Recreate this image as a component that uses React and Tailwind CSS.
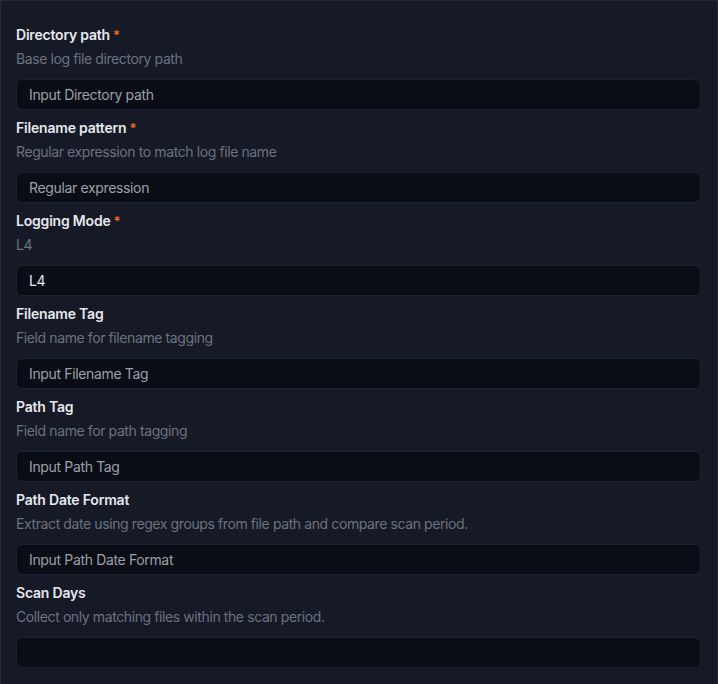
import React from "react";

const fields = [
  { label: "Directory path", required: true, desc: "Base log file directory path", placeholder: "Input Directory path" },
  { label: "Filename pattern", required: true, desc: "Regular expression to match log file name", placeholder: "Regular expression" },
  { label: "Logging Mode", required: true, desc: "L4", value: "L4" },
  { label: "Filename Tag", desc: "Field name for filename tagging", placeholder: "Input Filename Tag" },
  { label: "Path Tag", desc: "Field name for path tagging", placeholder: "Input Path Tag" },
  { label: "Path Date Format", desc: "Extract date using regex groups from file path and compare scan period.", placeholder: "Input Path Date Format" },
  { label: "Scan Days", desc: "Collect only matching files within the scan period.", placeholder: "" },
];

const Field = ({ label, required, desc, placeholder, value }) => (
  <div className="flex flex-col mb-2">
    <label className="flex items-center gap-[3px] h-5 text-sm font-semibold tracking-[-0.2px] text-[#e6e8ec] leading-5">
      {label}
      {required && <span className="text-[13px] text-[#f26b2a]">*</span>}
    </label>
    <p className="mt-1 h-5 text-sm leading-5 tracking-[-0.4px] text-[#6b7280]">{desc}</p>
    <input
      className="mt-2.5 h-[31px] w-full rounded-md border border-[#1b2131] bg-[#0a0d15] px-3 text-sm tracking-[-0.35px] text-[#e6e8ec] placeholder:text-[#9ca0a8] outline-none"
      placeholder={placeholder}
      defaultValue={value}
    />
  </div>
);

export default function App() {
  return (
    <div
      className="h-[684px] w-[718px] overflow-hidden bg-[#151a26] border-t border-x border-[#222a3b] pt-6 pl-[15px] pr-4"
      style={{ fontFamily: "Inter, 'Liberation Sans', sans-serif" }}
    >
      {fields.map((f) => (
        <Field key={f.label} {...f} />
      ))}
    </div>
  );
}
